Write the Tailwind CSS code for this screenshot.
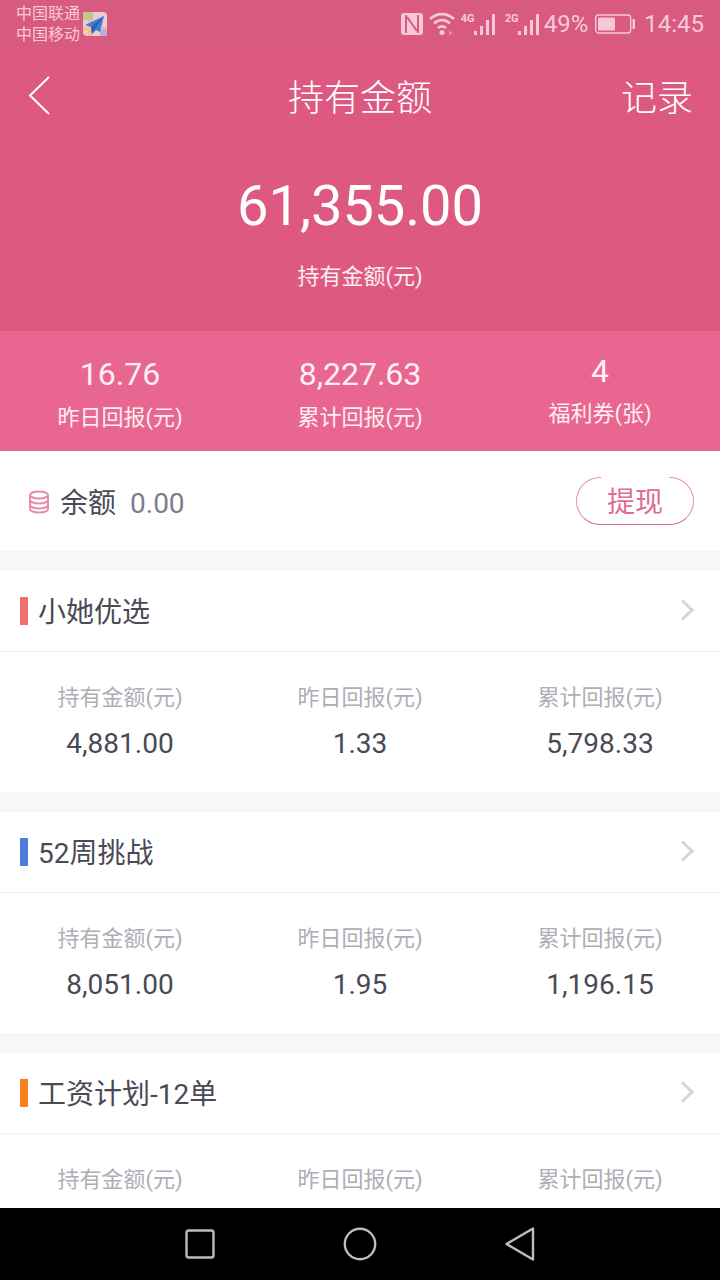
<!DOCTYPE html>
<html lang="zh">
<head>
  <meta charset="UTF-8" />
  <title>持有金额</title>
  <script src="https://cdn.jsdelivr.net/npm/@tailwindcss/browser@4"></script>
</head>
<body class="bg-[#f7f7f7] font-['Roboto','Noto_Sans_CJK_SC',sans-serif]">
  <div class="w-[720px] h-[1280px] overflow-hidden flex flex-col">
    <div class="h-[331px] shrink-0 bg-[#de5982] text-white flex flex-col">
      <!-- status bar -->
      <div class="h-[50px] shrink-0 bg-[#d85a80] flex items-center justify-between pl-4 pr-4 pb-[2px] text-[#f7c9d8]">
        <div class="flex items-center gap-[3px]">
          <div class="text-[16px] leading-[21px]"><div>中国联通</div><div>中国移动</div></div>
          <svg width="24" height="24" viewBox="0 0 24 24">
            <rect width="24" height="24" rx="4" fill="#efc9d6"/>
            <rect x="5" width="5" height="24" fill="#eec28f"/>
            <rect y="15" width="24" height="4" fill="#f0c685"/>
            <rect x="0" y="0" width="10" height="8" fill="#b9c98f"/>
            <rect x="17" y="17" width="7" height="7" fill="#b7aee0"/>
            <path d="M21 4 2 13l6 2 1 7 4-4 4 2z" fill="#3d80d8"/>
            <path d="M21 4 8 15l1 7 3-5z" fill="#2f62a8"/>
          </svg>
        </div>
        <div class="flex items-center">
          <svg width="22" height="22" viewBox="0 0 22 22" class="mr-[6px]">
            <path d="M3 0h16a3 3 0 0 1 3 3v16a3 3 0 0 1-3 3H3a3 3 0 0 1-3-3V3a3 3 0 0 1 3-3z" fill="#f7c9d8"/>
            <path d="M5 2v18M17 2v18M6 4l10 14" fill="none" stroke="#d85a80" stroke-width="2"/>
          </svg>
          <svg width="26" height="24" viewBox="0 0 26 24" fill="none" stroke="#f7c9d8" stroke-width="2.600" class="mr-[5px]">
            <path d="M1 7c7-6.500 17-6.500 24 0"/><path d="M5 11.500c5-4.500 11-4.500 16 0"/><path d="M9 16c2.500-2 5.500-2 8 0"/>
            <circle cx="13" cy="20.500" r="2.500" fill="#f7c9d8" stroke="none"/>
            <path d="M20 23.500v-5l4 2.500z" fill="#e98fac" stroke="none"/>
          </svg>
          <div class="relative w-[36px] h-[24px] mr-[8px]">
            <span class="absolute left-[1px] top-[1px] text-[11px] leading-[11px] font-bold">4G</span>
            <svg width="36" height="24" viewBox="0 0 36 24" fill="#f7c9d8">
              <rect x="14" y="19" width="3" height="4"/><rect x="20" y="14" width="3" height="9"/><rect x="26" y="8" width="3" height="15"/><rect x="32" y="2" width="3" height="21"/>
            </svg>
          </div>
          <div class="relative w-[36px] h-[24px]">
            <span class="absolute left-[1px] top-[1px] text-[11px] leading-[11px] font-bold">2G</span>
            <svg width="36" height="24" viewBox="0 0 36 24" fill="#f7c9d8">
              <rect x="14" y="19" width="3" height="4"/><rect x="20" y="14" width="3" height="9"/><rect x="26" y="8" width="3" height="15"/><rect x="32" y="2" width="3" height="21"/>
            </svg>
          </div>
          <span class="text-[24px] leading-[28px] ml-[4px]">49%</span>
          <svg width="40" height="20" viewBox="0 0 40 20" class="ml-[7px] mr-[9px]">
            <rect x="0.700" y="1" width="35" height="18" rx="3" fill="none" stroke="#f7c9d8" stroke-width="1.400"/>
            <rect x="3" y="3.500" width="17" height="13" rx="1" fill="#f7c9d8"/>
            <rect x="37.500" y="5" width="2.500" height="10" fill="#f7c9d8"/>
          </svg>
          <span class="text-[24px] leading-[28px]">14:45</span>
        </div>
      </div>
      <!-- header -->
      <div class="h-[94px] shrink-0 grid grid-cols-3 items-center px-[27px]">
        <svg width="24" height="40" viewBox="0 0 24 40" fill="none" stroke="white" stroke-width="2" class="mb-[5px] ml-[1px]"><path d="M21 2 2 20.500 21 39"/></svg>
        <div class="text-[36px] text-center whitespace-nowrap font-light pt-[3px]">持有金额</div>
        <div class="text-[36px] text-right font-light pt-[3px]">记录</div>
      </div>
      <div class="text-center text-[56px] leading-[64px] mt-[30px]">61,355.00</div>
      <div class="text-center text-[22px] leading-[30px] mt-[24px] text-white/90">持有金额(元)</div>
    </div>

    <!-- summary -->
    <div class="h-[120px] shrink-0 bg-[#e96690] text-white/90 grid grid-cols-3 text-center items-center">
      <div class="mt-[5px]"><div class="text-[32px] leading-[40px]">16.76</div><div class="text-[22px] leading-[30px] mt-[9px]">昨日回报(元)</div></div>
      <div class="mt-[5px]"><div class="text-[32px] leading-[40px]">8,227.63</div><div class="text-[22px] leading-[30px] mt-[9px]">累计回报(元)</div></div>
      <div class="mt-[-2px]"><div class="text-[32px] leading-[40px]">4</div><div class="text-[22px] leading-[30px] mt-[8px]">福利券(张)</div></div>
    </div>

    <!-- balance -->
    <div class="h-[100px] shrink-0 bg-white flex items-center justify-between pl-[28px] pr-[26px] mb-5">
      <div class="flex items-center text-[28px] leading-[40px] mt-[6px]">
        <svg width="22" height="24" viewBox="0 0 22 24" fill="none" stroke="#e88aa8" stroke-width="2" class="mr-[10px] mb-[4px]">
          <ellipse cx="11" cy="5" rx="9" ry="3.500"/>
          <path d="M2 5v14c0 2 4 3.500 9 3.500s9-1.500 9-3.500V5"/>
          <path d="M2 10c0 2 4 3.500 9 3.500s9-1.500 9-3.500"/>
          <path d="M2 15c0 2 4 3.500 9 3.500s9-1.500 9-3.500"/>
        </svg>
        <span class="text-[#4a4a55]">余额</span>
        <span class="ml-[14px] text-[#7d7d8a]">0.00</span>
      </div>
      <div class="relative w-[118px] h-[48px] pt-[4px] border border-[#e393ad] border-b-[#d9688f] rounded-full text-[#de6d93] text-[28px] flex items-center justify-center">
        <span class="absolute top-[-1px] left-[24px] right-[24px] h-px bg-white"></span>
        提现
      </div>
    </div>

    <!-- plan cards -->
    <div class="flex-1 min-h-0 overflow-hidden flex flex-col gap-5">
      <div class="bg-white shrink-0">
        <div class="h-[81px] border-b border-[#f0f0f0] flex items-center justify-between pl-5 pr-[26px]">
          <div class="flex items-center">
            <span class="w-2 h-[28px] bg-[#eb7070]"></span>
            <span class="ml-[10px] pt-[4px] text-[28px] text-[#4a4a55]">小她优选</span>
          </div>
          <svg width="14" height="22" viewBox="0 0 14 22" fill="none" stroke="#d5d5da" stroke-width="3" class="mb-[3px]"><path d="M2 1.500 12 11 2 20.500"/></svg>
        </div>
        <div class="h-[140px] grid grid-cols-3 text-center content-start pt-[31px]">
          <div><div class="text-[22px] leading-[30px] text-[#aeaeb6]">持有金额(元)</div><div class="text-[28px] leading-[36px] mt-[13px] text-[#4a4a55]">4,881.00</div></div>
          <div><div class="text-[22px] leading-[30px] text-[#aeaeb6]">昨日回报(元)</div><div class="text-[28px] leading-[36px] mt-[13px] text-[#4a4a55]">1.33</div></div>
          <div><div class="text-[22px] leading-[30px] text-[#aeaeb6]">累计回报(元)</div><div class="text-[28px] leading-[36px] mt-[13px] text-[#4a4a55]">5,798.33</div></div>
        </div>
      </div>
      <div class="bg-white shrink-0">
        <div class="h-[81px] border-b border-[#f0f0f0] flex items-center justify-between pl-5 pr-[26px]">
          <div class="flex items-center">
            <span class="w-2 h-[28px] bg-[#4f7bdb]"></span>
            <span class="ml-[10px] pt-[4px] text-[28px] text-[#4a4a55]">52周挑战</span>
          </div>
          <svg width="14" height="22" viewBox="0 0 14 22" fill="none" stroke="#d5d5da" stroke-width="3" class="mb-[3px]"><path d="M2 1.500 12 11 2 20.500"/></svg>
        </div>
        <div class="h-[140px] grid grid-cols-3 text-center content-start pt-[31px]">
          <div><div class="text-[22px] leading-[30px] text-[#aeaeb6]">持有金额(元)</div><div class="text-[28px] leading-[36px] mt-[13px] text-[#4a4a55]">8,051.00</div></div>
          <div><div class="text-[22px] leading-[30px] text-[#aeaeb6]">昨日回报(元)</div><div class="text-[28px] leading-[36px] mt-[13px] text-[#4a4a55]">1.95</div></div>
          <div><div class="text-[22px] leading-[30px] text-[#aeaeb6]">累计回报(元)</div><div class="text-[28px] leading-[36px] mt-[13px] text-[#4a4a55]">1,196.15</div></div>
        </div>
      </div>
      <div class="bg-white shrink-0">
        <div class="h-[81px] border-b border-[#f0f0f0] flex items-center justify-between pl-5 pr-[26px]">
          <div class="flex items-center">
            <span class="w-2 h-[28px] bg-[#f5821f]"></span>
            <span class="ml-[10px] pt-[4px] text-[28px] text-[#4a4a55]">工资计划-12单</span>
          </div>
          <svg width="14" height="22" viewBox="0 0 14 22" fill="none" stroke="#d5d5da" stroke-width="3" class="mb-[3px]"><path d="M2 1.500 12 11 2 20.500"/></svg>
        </div>
        <div class="h-[140px] grid grid-cols-3 text-center content-start pt-[31px]">
          <div><div class="text-[22px] leading-[30px] text-[#aeaeb6]">持有金额(元)</div></div>
          <div><div class="text-[22px] leading-[30px] text-[#aeaeb6]">昨日回报(元)</div></div>
          <div><div class="text-[22px] leading-[30px] text-[#aeaeb6]">累计回报(元)</div></div>
        </div>
      </div>
    </div>

    <!-- android nav -->
    <div class="h-[72px] shrink-0 bg-black grid grid-cols-3 items-center px-[120px] justify-items-center">
      <svg width="30" height="30" viewBox="0 0 30 30" fill="none" stroke="#bdbdbd" stroke-width="2.400"><rect x="1.500" y="1.500" width="27" height="27" rx="2"/></svg>
      <svg width="34" height="34" viewBox="0 0 34 34" fill="none" stroke="#bdbdbd" stroke-width="2.400"><circle cx="17" cy="17" r="15.200"/></svg>
      <svg width="30" height="34" viewBox="0 0 30 34" fill="none" stroke="#bdbdbd" stroke-width="2.400" stroke-linejoin="round"><path d="M1.500 17 28 1.500v31z"/></svg>
    </div>
  </div>
</body>
</html>
